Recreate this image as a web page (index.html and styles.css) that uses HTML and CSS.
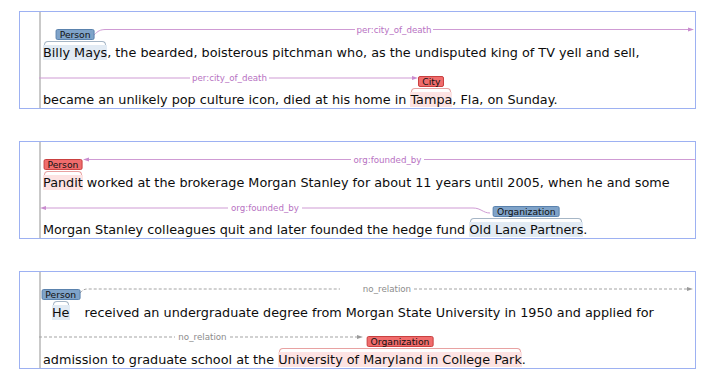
FILE: index.html
```html
<html>

<head>
    <meta charset="UTF-8">
    <title>Relation annotations</title>
    <link rel="stylesheet" href="styles.css">
</head>

<body>
    <div class="sent">
        <svg class="arcs" width="675" height="96">
            <path class="rel" d="M74 23 C78 19, 80 17.5, 86 17.5 H335 M413 17.5 H668" />
            <polygon class="head" points="668,15.5 674,17.5 668,19.5" />
            <text class="rlabel" x="374" y="17.5">per:city_of_death</text>
            <path class="rel" d="M19 66 H170 M249 66 H392" />
            <polygon class="head" points="392,64 398,66 392,68" />
            <text class="rlabel" x="209.5" y="66">per:city_of_death</text>
        </svg>
        <div class="gutter"></div>
        <div class="text">
            <div class="row"><span class="ent blue">Billy Mays<span class="tag">Person</span></span>, the bearded, boisterous pitchman who, as the undisputed king of TV yell and sell,</div>
            <div class="row">became an unlikely pop culture icon, died at his home in <span class="ent red">Tampa<span class="tag">City</span></span>, Fla, on Sunday.</div>
        </div>
    </div>

    <div class="sent">
        <svg class="arcs" width="675" height="96">
            <polygon class="head" points="63,17.5 69,15.5 69,19.5" />
            <path class="rel" d="M69 17.5 H331 M404 17.5 H675" />
            <text class="rlabel" x="367.5" y="17.5">org:founded_by</text>
            <polygon class="head" points="20,66 26,64 26,68" />
            <path class="rel" d="M26 66 H208 M282 66 H453 C461 66, 463 71, 470 71" />
            <text class="rlabel" x="245" y="66">org:founded_by</text>
        </svg>
        <div class="gutter"></div>
        <div class="text">
            <div class="row"><span class="ent red">Pandit<span class="tag">Person</span></span> worked at the brokerage Morgan Stanley for about 11 years until 2005, when he and some</div>
            <div class="row">Morgan Stanley colleagues quit and later founded the hedge fund <span class="ent blue">Old Lane Partners<span class="tag">Organization</span></span>.</div>
        </div>
    </div>

    <div class="sent">
        <svg class="arcs" width="675" height="96">
            <path class="rel none" d="M60 21 C63 18, 64 17, 68 17 H320 M394 17 H667" />
            <polygon class="head none" points="667,15 673,17 667,19" />
            <text class="rlabel none" x="367" y="17">no_relation</text>
            <path class="rel none" d="M19 65 H155 M210 65 H337" />
            <polygon class="head none" points="337,63 343,65 337,67" />
            <text class="rlabel none" x="182.5" y="65">no_relation</text>
        </svg>
        <div class="gutter"></div>
        <div class="text">
            <div class="row"><span class="ent blue pad">He<span class="tag">Person</span></span> received an undergraduate degree from Morgan State University in 1950 and applied for</div>
            <div class="row">admission to graduate school at the <span class="ent red">University of Maryland in College Park<span class="tag">Organization</span></span>.</div>
        </div>
    </div>
</body>

</html>
```

FILE: styles.css
```css
body {
    margin: 0;
    padding-top: 11px;
    background-color: #ffffff;
    font-family: "DejaVu Sans", Verdana, sans-serif;
}

.sent {
    position: relative;
    display: flex;
    width: 675px;
    height: 96px;
    margin: 0 0 32px 19px;
    border: 1px solid #9db1f2;
}

.gutter {
    flex: none;
    width: 19px;
    border-right: 2px solid #c9c9c9;
}

.text {
    padding-left: 2px;
    font-size: 12.8px;
    color: #0d0d0d;
}

.row {
    line-height: 16px;
    white-space: nowrap;
    padding-top: 31px;
}

.row:first-child {
    padding-top: 33px;
}

/* arcs between the entities */
.arcs {
    position: absolute;
    left: 0;
    top: 0;
    overflow: visible;
}

.rel {
    fill: none;
    stroke: #cf9bd4;
    stroke-width: 1;
}

.head {
    fill: #c98ccf;
}

.rlabel {
    font-family: "DejaVu Sans", Verdana, sans-serif;
    font-size: 8.7px;
    fill: #b772c2;
    text-anchor: middle;
    dominant-baseline: central;
}

.rel.none {
    stroke: #a3a3a3;
    stroke-dasharray: 3 2;
}

.head.none {
    fill: #9a9a9a;
}

.rlabel.none {
    fill: #8c8c8c;
}

/* entity spans and their type tags */
.ent {
    position: relative;
}

.ent.blue {
    background-color: #e2ebf4;
}

.ent.red {
    background-color: #fde3e3;
}

.ent::before {
    content: "";
    position: absolute;
    left: 1px;
    right: 1px;
    top: -4px;
    height: 3px;
    border: 1px solid;
    border-bottom: 0;
    border-radius: 6px 6px 0 0;
}

.ent.blue::before {
    border-color: #a6b6c6;
}

.ent.red::before {
    border-color: #e8a2a2;
}

.pad {
    margin: 0 11px 0 9px;
}

.tag {
    position: absolute;
    left: 50%;
    bottom: calc(100% + 5px);
    transform: translateX(-50%);
    padding: 0 3px;
    font-size: 9.2px;
    line-height: 9px;
    color: #111111;
    border: 1px solid;
    border-radius: 2px;
    white-space: nowrap;
}

.blue .tag {
    background-color: #7fa3c9;
    border-color: #5a82ad;
}

.red .tag {
    background-color: #f06c6c;
    border-color: #c94040;
}
```
